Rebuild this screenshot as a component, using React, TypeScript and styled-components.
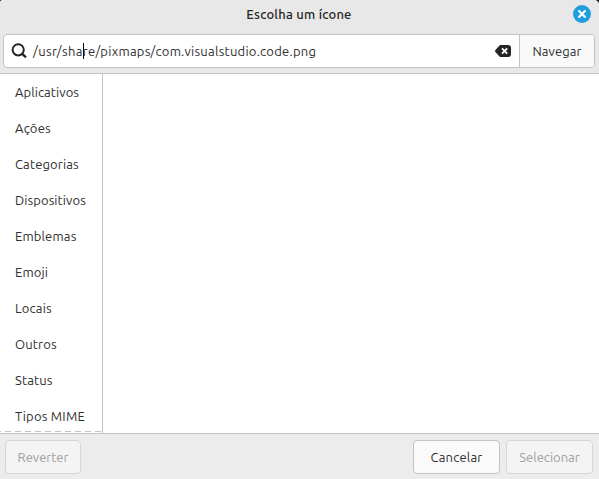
import React from "react";
import styled, { createGlobalStyle } from "styled-components";

const Global = createGlobalStyle`
  * { box-sizing: border-box; }
  html, body { margin: 0; padding: 0; overflow: hidden; }
  body { background: #1c1c1c; font-family: Ubuntu, "Noto Sans", sans-serif; font-size: 13px; color: #303030; }
`;

const Dialog = styled.div`
  width: 599px; height: 479px; display: flex; flex-direction: column;
  background: #ffffff; border-radius: 3px 5px 0 0; overflow: hidden;
`;
const Header = styled.header`
  height: 74px; flex: none; background: #e8e8e8; border-bottom: 1px solid #c2c3c3;
  display: flex; flex-direction: column;
`;
const TitleBar = styled.div`
  height: 34px; flex: none; padding-right: 8px;
  display: grid; grid-template-columns: 20px 1fr 18px; align-items: start;
`;
const Title = styled.h1`
  margin: 0; padding-left: 5px; text-align: center; font-size: 13px; font-weight: 500;
  line-height: 28px; color: #252525;
`;
const CloseButton = styled.button`
  width: 18px; height: 18px; margin: 5px 0 0; padding: 0; border: 0; border-radius: 50%;
  background: #1f9ede; display: flex; align-items: center; justify-content: center;
`;
const SearchRow = styled.div`
  height: 34px; margin: 0 4px 0 3px; display: flex; border: 1px solid #c2c3c3;
  border-radius: 4px; background: #ffffff; overflow: hidden;
`;
const Field = styled.div`
  flex: 1; display: flex; align-items: center; padding: 0 8px 0 7px;
  svg { flex: none; }
`;
const Path = styled.div`
  flex: 1; display: flex; align-items: center; padding-left: 6px; white-space: pre;
`;
const Caret = styled.span`
  width: 1px; height: 16px; margin-right: -1px; background: #000;
`;
const Browse = styled.button`
  width: 75px; border: 0; border-left: 1px solid #c2c3c3; padding: 0; background: #f9f9f9;
  font: inherit; color: #303030;
`;
const Text = styled.span<{ $spacing?: number }>`
  letter-spacing: ${({ $spacing = 0 }) => $spacing}px; white-space: pre;
`;
const Main = styled.main`
  height: 359px; display: flex; flex: none;
`;
const Sidebar = styled.nav`
  width: 103px; border-right: 1px solid #c2c3c3; display: flex; flex-direction: column; overflow: hidden;
`;
const Category = styled.div`
  height: 36px; flex: none; padding-left: 15px; line-height: 36px;
`;
const Overflow = styled.div`
  height: 1px; flex: none; margin-top: -3px;
  background: repeating-linear-gradient(90deg, #c2c3c3 0 1px, transparent 1px 5px, #c2c3c3 5px 10px);
`;
const Footer = styled.footer`
  flex: 1; padding: 6px 6px 5px 5px; display: flex; gap: 6px; background: #ececec;
  border-top: 1px solid #c2c3c3;
`;
const ActionButton = styled.button<{ $width: number }>`
  width: ${({ $width }) => $width}px; height: 34px; padding: 0; font: inherit;
  border: 1px solid #c2c3c3; border-radius: 4px; background: #fafafa; color: #303030;
  &:disabled { background: #f4f4f4; color: #a0a0a0; border-color: #d6d6d6; }
`;
const Spacer = styled.div`
  flex: 1;
`;

const categories: [string, number][] = [
  ["Aplicativos", 0.09], ["Ações", 0.2], ["Categorias", 0.14], ["Dispositivos", 0.09], ["Emblemas", 0.15],
  ["Emoji", 0.12], ["Locais", 0.2], ["Outros", 0.15], ["Status", 0.15], ["Tipos MIME", 0.22],
];

export default function App() {
  return (
    <>
      <Global />
      <Dialog>
        <Header>
          <TitleBar>
            <span />
            <Title><Text $spacing={0.22}>Escolha um ícone</Text></Title>
            <CloseButton aria-label="Fechar">
              <svg width="8" height="8" viewBox="0 0 8 8" stroke="#fff" strokeWidth="2.2">
                <path d="M.4.4 7.6 7.6M7.6.4.4 7.6" />
              </svg>
            </CloseButton>
          </TitleBar>
          <SearchRow>
            <Field>
              <svg width="16" height="16" viewBox="0 0 16 16" fill="none" stroke="#252525" strokeWidth="2">
                <circle cx="7.2" cy="6.8" r="5.6" />
                <path d="m11 10.6 4 3.8" strokeWidth="2.3" />
              </svg>
              <Path>
                <Text $spacing={0.38}>/usr/sha</Text><Caret /><Text $spacing={0.25}>re/pixmaps/com.visualstudio.code.png</Text>
              </Path>
              <svg width="16" height="12" viewBox="0 0 16 12">
                <path d="M5 0h8a3 3 0 0 1 3 3v6a3 3 0 0 1-3 3H5L.4 7Q-.4 6 .4 5z" fill="#252525" />
                <path d="m7 3.4 5.2 5.2M12.2 3.4 7 8.6" stroke="#fff" strokeWidth="1.8" />
              </svg>
            </Field>
            <Browse><Text $spacing={0.1}>Navegar</Text></Browse>
          </SearchRow>
        </Header>
        <Main>
          <Sidebar>
            {categories.map(([name, spacing]) => (
              <Category key={name}><Text $spacing={spacing}>{name}</Text></Category>
            ))}
            <Overflow />
          </Sidebar>
        </Main>
        <Footer>
          <ActionButton $width={76} disabled><Text>Reverter</Text></ActionButton>
          <Spacer />
          <ActionButton $width={87}><Text $spacing={0.2}>Cancelar</Text></ActionButton>
          <ActionButton $width={87} disabled><Text>Selecionar</Text></ActionButton>
        </Footer>
      </Dialog>
    </>
  );
}
